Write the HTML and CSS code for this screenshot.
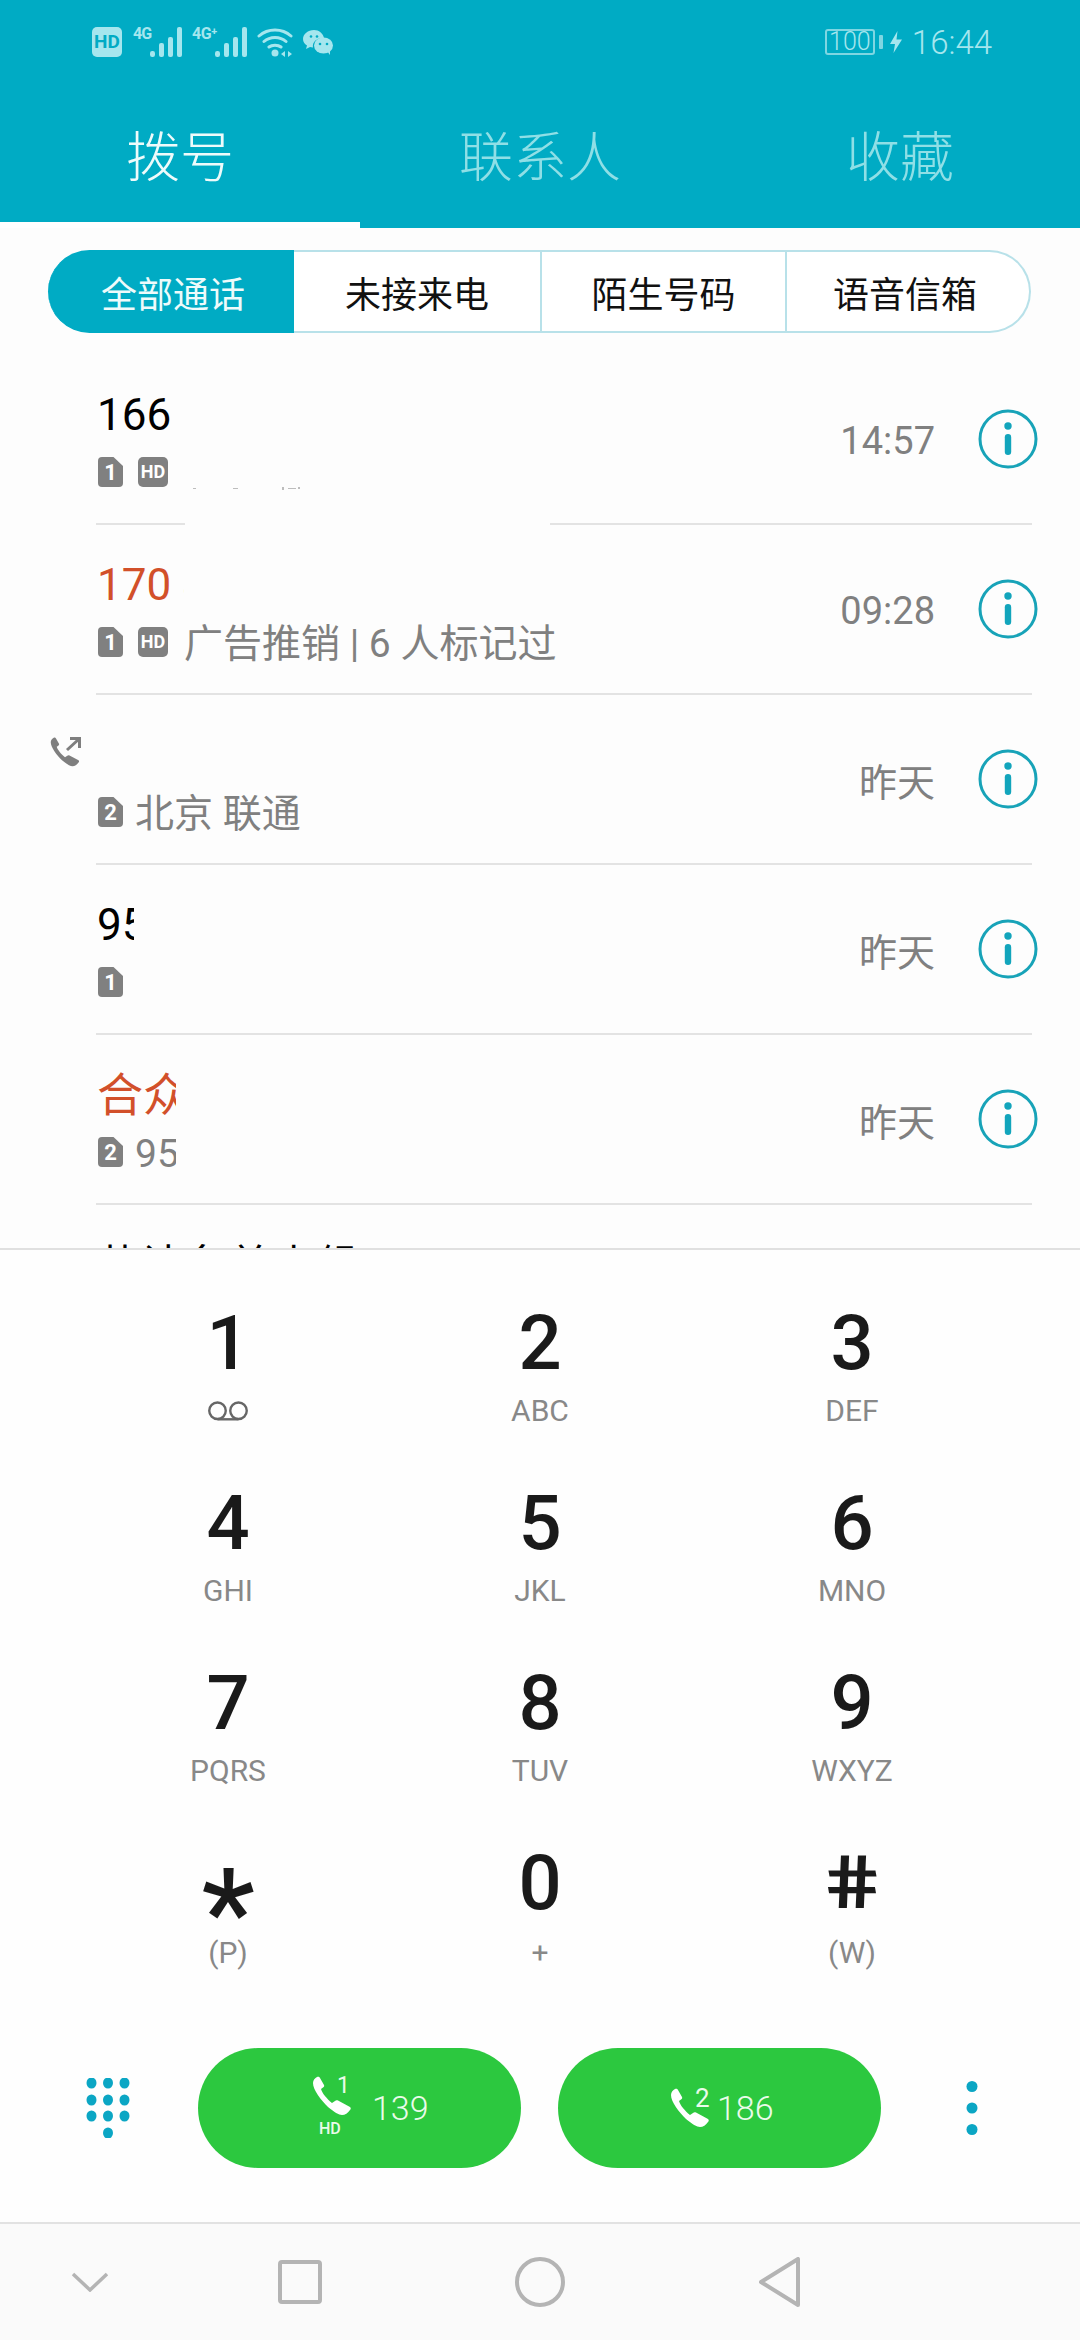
FILE: index.html
```html
<!DOCTYPE html>
<html lang="zh">
<head>
<meta charset="utf-8">
<title>拨号</title>
<link rel="stylesheet" href="styles.css">
</head>
<body>
<svg class="defs" width="0" height="0" aria-hidden="true">
  <defs>
    <symbol id="handset" viewBox="0 0 40 40"><path d="M1 7C1 4 3 2 5 1C6.5.5 7.5 1 8 2L12 9C12.5 10 12 11 11 11.5L9 13C10 17 15 23 20 27L23 25C24 24 25 24 26 24.5L38 31C39 32 39 33 38 34C36 37 33 39 30 39C27 39 22 36 16 31C9 24 1 14 1 7Z"/></symbol>
    <symbol id="info" viewBox="0 0 60 60"><circle cx="30" cy="30" r="28" fill="none" stroke="#18a3b8" stroke-width="3"/><circle cx="30" cy="17" r="3.7" fill="#12a5bc"/><rect x="26.8" y="25" width="6.4" height="21" rx="3.2" fill="#12a5bc"/></symbol>
    <symbol id="bars" viewBox="0 0 32 30"><rect x="0" y="24" width="5" height="6" rx="2.2"/><rect x="9" y="16" width="5" height="14" rx="2"/><rect x="18" y="10" width="5" height="20" rx="2"/><rect x="27" y="0" width="5" height="30" rx="2"/></symbol>
  </defs>
</svg>
<div class="phone">
  <header class="header">
    <div class="status">
      <span class="hd-chip">HD</span>
      <span class="sig"><span class="sig-label sig-label-4g">4G</span><svg class="bars"><use href="#bars"/></svg></span>
      <span class="sig"><span class="sig-label sig-label-plus">4G⁺</span><svg class="bars"><use href="#bars"/></svg></span>
      <svg class="wifi" viewBox="0 0 36 30">
        <path d="M2 9C11 1 25 1 34 9M7 14.500C13 9 23 9 29 14.500M12 20C15 17.500 21 17.500 24 20" fill="none" stroke="#a5e6ee" stroke-width="3" stroke-linecap="round"/>
        <circle cx="18" cy="26" r="3.500" fill="#a5e6ee"/>
        <path d="M28 24L24 27L28 30ZM31 24L35 27L31 30Z" fill="#a5e6ee"/>
      </svg>
      <svg class="wechat" viewBox="0 0 30 25">
        <path d="M11 0C5 0 0 4 0 9C0 12 1.500 14 4 15.500L3 19L7 17C8 17.300 9 17.500 10 17.500C9 12 14 7.500 21 8C20 3.500 16 0 11 0Z" fill="#a5e6ee"/>
        <ellipse cx="20.500" cy="15.500" rx="9.500" ry="8" fill="#a5e6ee"/>
        <path d="M24 21L27 25L27 19Z" fill="#a5e6ee"/>
        <circle cx="8" cy="6.500" r="1.300" fill="#00abc4"/><circle cx="14" cy="6.500" r="1.300" fill="#00abc4"/>
        <circle cx="17" cy="14" r="1.300" fill="#00abc4"/><circle cx="24" cy="14" r="1.300" fill="#00abc4"/>
      </svg>
      <span class="status-right">
        <span class="battery">100</span>
        <span class="battery-tip"></span>
        <svg class="bolt" viewBox="0 0 12 22"><path d="M7.500 0L0 13H5L3.500 22L12 8.500H6.500Z" fill="#a5e6ee"/></svg>
        <span class="clock">16:44</span>
      </span>
    </div>
    <nav class="tabs">
      <div class="tab tab-active">拨号</div>
      <div class="tab">联系人</div>
      <div class="tab">收藏</div>
    </nav>
  </header>

  <main class="content">
    <div class="segments">
      <div class="seg seg-active">全部通话</div>
      <div class="seg seg-wide">未接来电</div>
      <div class="seg">陌生号码</div>
      <div class="seg seg-last">语音信箱</div>
    </div>

    <div class="list">
      <div class="row">
        <div class="row-main">
          <div class="name">166</div>
          <div class="sub"><span class="sim">1</span><span class="hd">HD</span></div>
        </div>
        <div class="time time-num">14:57</div>
        <svg class="info"><use href="#info"/></svg>
        <div class="patch">
          <svg class="specks" viewBox="0 0 125 6"><path d="M8 2h3v1H8ZM48 2h5v1h-5ZM97 1h2v3h-2ZM103 2h8v1h-8ZM113 1h2v2h-2Z" fill="#bdbdbd"/></svg>
        </div>
      </div>

      <div class="row">
        <div class="row-main">
          <div class="name name-alert"><span class="clip clip-87">170 8</span></div>
          <div class="sub"><span class="sim">1</span><span class="hd">HD</span><span class="sub-text sub-text-hd">广告推销 | 6 人标记过</span></div>
        </div>
        <div class="time time-num">09:28</div>
        <svg class="info"><use href="#info"/></svg>
      </div>

      <div class="row">
        <svg class="outgoing" viewBox="0 0 32 32">
          <use href="#handset" width="30" height="30" y="1" fill="#7f7f7f"/>
          <path d="M17 14L29 3M20 2.500H29.500V12" fill="none" stroke="#7f7f7f" stroke-width="3"/>
        </svg>
        <div class="row-main">
          <div class="name"></div>
          <div class="sub"><span class="sim">2</span><span class="sub-text">北京 联通</span></div>
        </div>
        <div class="time">昨天</div>
        <svg class="info"><use href="#info"/></svg>
      </div>

      <div class="row">
        <div class="row-main">
          <div class="name"><span class="clip clip-37">95</span></div>
          <div class="sub"><span class="sim">1</span></div>
        </div>
        <div class="time">昨天</div>
        <svg class="info"><use href="#info"/></svg>
      </div>

      <div class="row">
        <div class="row-main">
          <div class="name name-alert name-cjk"><span class="clip clip-79">合众</span></div>
          <div class="sub"><span class="sim">2</span><span class="sub-text"><span class="clip clip-41">95</span></span></div>
        </div>
        <div class="time">昨天</div>
        <svg class="info"><use href="#info"/></svg>
      </div>

      <div class="row">
        <div class="row-main">
          <div class="name name-cut">共计名单小组</div>
        </div>
      </div>
    </div>
  </main>

  <section class="panel">
    <div class="keypad">
      <div class="key"><div class="digit">1</div><div class="letters"><svg class="voicemail" viewBox="0 0 28 14"><circle cx="7" cy="6.500" r="5.500" fill="none" stroke="#666" stroke-width="1.600"/><circle cx="21" cy="6.500" r="5.500" fill="none" stroke="#666" stroke-width="1.600"/><path d="M7 12.200H21" stroke="#666" stroke-width="1.600"/></svg></div></div>
      <div class="key"><div class="digit">2</div><div class="letters">ABC</div></div>
      <div class="key"><div class="digit">3</div><div class="letters">DEF</div></div>
      <div class="key"><div class="digit">4</div><div class="letters">GHI</div></div>
      <div class="key"><div class="digit">5</div><div class="letters">JKL</div></div>
      <div class="key"><div class="digit">6</div><div class="letters">MNO</div></div>
      <div class="key"><div class="digit">7</div><div class="letters">PQRS</div></div>
      <div class="key"><div class="digit">8</div><div class="letters">TUV</div></div>
      <div class="key"><div class="digit">9</div><div class="letters">WXYZ</div></div>
      <div class="key"><div class="digit digit-star">*</div><div class="letters letters-low">(P)</div></div>
      <div class="key"><div class="digit">0</div><div class="letters letters-low">+</div></div>
      <div class="key"><div class="digit digit-hash">#</div><div class="letters letters-low">(W)</div></div>
    </div>

    <div class="call-row">
      <svg class="dialpad" viewBox="0 0 44 60" fill="#0ba6c4">
        <ellipse cx="5.500" cy="5" rx="5" ry="5.500"/><ellipse cx="22" cy="5" rx="5" ry="5.500"/><ellipse cx="38.500" cy="5" rx="5" ry="5.500"/>
        <ellipse cx="5.500" cy="22" rx="5" ry="5.500"/><ellipse cx="22" cy="22" rx="5" ry="5.500"/><ellipse cx="38.500" cy="22" rx="5" ry="5.500"/>
        <ellipse cx="5.500" cy="38" rx="5" ry="5.500"/><ellipse cx="22" cy="38" rx="5" ry="5.500"/><ellipse cx="38.500" cy="38" rx="5" ry="5.500"/>
        <ellipse cx="22" cy="55" rx="5" ry="5.500"/>
      </svg>
      <div class="call-btn call-btn-1">
        <span class="call-ico call-ico-raised">
          <svg class="handset"><use href="#handset"/></svg>
          <span class="sup sup-1">1</span>
          <span class="call-hd">HD</span>
        </span>
        <span class="call-num call-num-1">139</span>
      </div>
      <div class="call-btn call-btn-2">
        <span class="call-ico">
          <svg class="handset"><use href="#handset"/></svg>
          <span class="sup sup-2">2</span>
        </span>
        <span class="call-num call-num-2">186</span>
      </div>
      <svg class="menu" viewBox="0 0 12 54" fill="#0ba6c4">
        <ellipse cx="6" cy="5.500" rx="5.500" ry="5.500"/><ellipse cx="6" cy="27" rx="5.500" ry="5.500"/><ellipse cx="6" cy="48.500" rx="5.500" ry="5.500"/>
      </svg>
    </div>
  </section>

  <footer class="navbar">
    <svg class="nav-chevron" viewBox="0 0 38 20"><path d="M2 2L19 18L36 2" fill="none" stroke="#b4b4b4" stroke-width="3.500"/></svg>
    <svg class="nav-square" viewBox="0 0 44 44"><rect x="2" y="2" width="40" height="40" rx="2" fill="none" stroke="#b4b4b4" stroke-width="4"/></svg>
    <svg class="nav-circle" viewBox="0 0 50 50"><circle cx="25" cy="25" r="23" fill="none" stroke="#b4b4b4" stroke-width="4"/></svg>
    <svg class="nav-back" viewBox="0 0 41 50"><path d="M39 2V48L2 25Z" fill="none" stroke="#b4b4b4" stroke-width="4" stroke-linejoin="round"/></svg>
  </footer>
</div>
</body>
</html>
```

FILE: styles.css
```css
* { box-sizing: border-box; }

html, body {
  margin: 0;
  padding: 0;
  background: #fdfdfd;
}

body {
  font-family: Roboto, "Noto Sans CJK SC", sans-serif;
}

.defs { position: absolute; }

.phone {
  width: 1080px;
  height: 2340px;
  overflow: hidden;
  display: flex;
  flex-direction: column;
}

/* header */
.header {
  height: 228px;
  background: #00abc4;
  flex: none;
}

.status {
  height: 84px;
  display: flex;
  align-items: center;
  gap: 10px;
  padding: 0 88px 0 92px;
  color: #a5e6ee;
}

.hd-chip {
  width: 30px;
  height: 30px;
  margin-right: 1px;
  border-radius: 5px;
  background: #a5e6ee;
  color: #00abc4;
  font-size: 19px;
  font-weight: 700;
  line-height: 30px;
  text-align: center;
}

.sig {
  display: flex;
  align-items: flex-start;
  height: 30px;
}

.sig-label {
  font-size: 16px;
  font-weight: 700;
  line-height: 14px;
  white-space: nowrap;
}

.sig-label-4g { width: 17px; letter-spacing: -1px; }
.sig-label-plus { width: 23px; letter-spacing: -.5px; }

.bars {
  width: 32px;
  height: 30px;
  fill: #a5e6ee;
}

.wifi { width: 36px; height: 30px; }
.wechat { width: 30px; height: 25px; }

.status-right {
  margin-left: auto;
  display: flex;
  align-items: center;
}

.battery {
  width: 50px;
  height: 26px;
  border: 2px solid #7fd6e2;
  border-radius: 3px;
  font-size: 25px;
  font-weight: 300;
  line-height: 22px;
  text-align: center;
}

.battery-tip {
  width: 4px;
  height: 14px;
  margin-left: 4px;
  border-radius: 1px;
  background: #7fd6e2;
}

.bolt {
  width: 12px;
  height: 22px;
  margin-left: 7px;
}

.clock {
  margin-left: 10px;
  padding-top: 2px;
  font-size: 33px;
  line-height: 40px;
  font-weight: 300;
}

.tabs {
  height: 144px;
  display: flex;
}

.tab {
  width: 360px;
  height: 144px;
  display: flex;
  align-items: center;
  justify-content: center;
  padding-bottom: 5px;
  font-size: 54px;
  font-weight: 300;
  color: #8fdfe6;
}

.tab-active {
  color: #eefbfb;
  border-bottom: 6px solid #ffffff;
  padding-bottom: 0;
}

/* call log */
.content {
  height: 1020px;
  flex: none;
  overflow: hidden;
  background: #fdfdfd;
  padding-top: 22px;
}

.segments {
  display: flex;
  width: 983px;
  height: 83px;
  margin-left: 48px;
}

.seg {
  width: 245px;
  display: flex;
  align-items: center;
  justify-content: center;
  border: 2px solid #b8e1e9;
  border-left: 0;
  font-size: 36px;
  color: #111111;
  background: #ffffff;
}

.seg-active {
  width: 246px;
  padding-left: 6px;
  background: #00abc4;
  border-color: #00abc4;
  color: #eefbfb;
  border-radius: 42px 0 0 42px;
}

.seg-wide { width: 248px; }

.seg-last {
  width: 244px;
  padding-right: 6px;
  border-radius: 0 42px 42px 0;
}

.list { padding-top: 22px; }

.row {
  position: relative;
  height: 170px;
  margin: 0 48px 0 96px;
  display: flex;
  align-items: center;
  border-bottom: 2px solid #e3e3e3;
}

.row-main {
  flex: 1;
  align-self: flex-start;
  padding-top: 35px;
}

.name {
  height: 50px;
  padding-left: 1px;
  font-size: 44px;
  line-height: 50px;
  color: #000000;
  white-space: nowrap;
}

.name-alert { color: #d2502a; }

.name-cjk { font-size: 46px; }

.name-cut { font-size: 41px; letter-spacing: 3px; }

.clip {
  display: inline-block;
  overflow: hidden;
  vertical-align: top;
  white-space: nowrap;
}

.clip-87 { width: 87px; }
.clip-37 { width: 37px; }
.clip-79 { width: 79px; }
.clip-41 { width: 41px; }

.sub {
  height: 50px;
  margin-top: 7px;
  padding-left: 2px;
  display: flex;
  align-items: center;
  color: #808080;
  white-space: nowrap;
}

.sim {
  width: 25px;
  height: 30px;
  border-radius: 4px;
  background: #808080;
  color: #ffffff;
  font-size: 22px;
  font-weight: 700;
  line-height: 31px;
  text-align: center;
  clip-path: polygon(0 0, 62% 0, 100% 30%, 100% 100%, 0 100%);
}

.hd {
  width: 30px;
  height: 30px;
  margin-left: 15px;
  border-radius: 5px;
  background: #808080;
  color: #ffffff;
  font-size: 18px;
  font-weight: 700;
  line-height: 30px;
  text-align: center;
}

.sub-text {
  margin-left: 12px;
  margin-top: 3px;
  font-size: 39px;
  line-height: 50px;
}

.sub-text-hd { margin-left: 16px; }

.time {
  margin-right: 43px;
  font-size: 38px;
  color: #808080;
}

.time-num { padding-top: 4px; }

.info {
  width: 60px;
  height: 60px;
  margin-right: -6px;
}

.patch {
  position: absolute;
  left: 89px;
  top: 131px;
  width: 365px;
  height: 40px;
  background: #fdfdfd;
}

.specks {
  display: block;
  width: 125px;
  height: 6px;
}

.outgoing {
  position: absolute;
  left: -46px;
  top: 41px;
  width: 32px;
  height: 32px;
}

/* keypad */
.panel {
  flex: 1;
  background: #fefefe;
  border-top: 2px solid #e0e0e0;
}

.keypad {
  display: grid;
  grid-template-columns: repeat(3, 312px);
  grid-auto-rows: 180px;
  padding: 55px 72px 0;
  justify-content: start;
}

.key {
  display: flex;
  flex-direction: column;
  align-items: center;
}

.digit {
  height: 76px;
  font-size: 76px;
  font-weight: 500;
  line-height: 76px;
  color: #1a1a1a;
}

.digit-star {
  font-size: 120px;
  line-height: 120px;
  padding-top: 8px;
}

.digit-hash {
  font-size: 74px;
  font-weight: 700;
  transform: scaleX(1.25) skewX(8deg);
}

.letters {
  height: 34px;
  margin-top: 13px;
  display: flex;
  align-items: center;
  font-size: 30px;
  line-height: 34px;
  color: #888888;
}

.letters-low { margin-top: 15px; }

.voicemail { width: 42px; height: 21px; }

.call-row {
  display: flex;
  align-items: center;
  height: 120px;
  margin-top: 23px;
  padding-left: 86px;
}

.dialpad {
  width: 44px;
  height: 60px;
  margin-right: 68px;
}

.call-btn {
  width: 323px;
  height: 120px;
  border-radius: 60px / 60px;
  background: #2cc83f;
  display: flex;
  align-items: center;
  color: #eafbea;
}

.call-btn-1 { padding-left: 114px; }

.call-btn-2 {
  margin-left: 37px;
  padding-left: 112px;
}

.call-ico {
  position: relative;
  display: block;
  width: 40px;
  height: 40px;
}

.call-ico-raised { margin-bottom: 24px; }

.handset {
  display: block;
  width: 40px;
  height: 40px;
  fill: #ffffff;
}

.sup {
  position: absolute;
  line-height: 1;
}

.sup-1 { left: 25px; top: -2px; font-size: 23px; }
.sup-2 { left: 25px; top: -3px; font-size: 26px; }

.call-hd {
  position: absolute;
  left: 7px;
  top: 45px;
  font-size: 16px;
  font-weight: 500;
  line-height: 16px;
}

.call-num {
  font-size: 34px;
  font-weight: 300;
}

.call-num-1 { margin-left: 20px; }
.call-num-2 { margin-left: 7px; }

.menu {
  width: 12px;
  height: 54px;
  margin-left: 85px;
}

.navbar {
  height: 118px;
  flex: none;
  display: flex;
  align-items: center;
  padding-left: 71px;
  background: #fafafa;
  border-top: 2px solid #e2e2e2;
}

.nav-chevron { width: 38px; height: 20px; }
.nav-square { width: 44px; height: 44px; margin-left: 169px; }
.nav-circle { width: 50px; height: 50px; margin-left: 193px; }
.nav-back { width: 41px; height: 50px; margin-left: 194px; }
```
